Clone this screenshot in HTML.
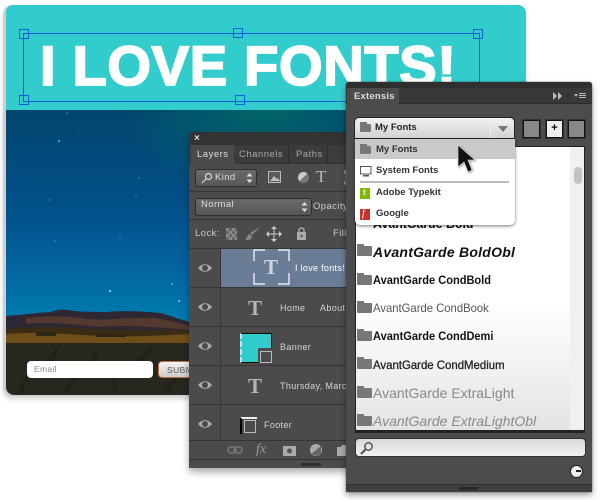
<!DOCTYPE html>
<html><head><meta charset="utf-8"><style>
html,body{margin:0;padding:0;background:#fff}
#p{position:relative;width:600px;height:500px;overflow:hidden;font-family:"Liberation Sans",sans-serif}
#p div,#p span.a,#p svg{position:absolute}
.h{width:8px;height:8px;border:1px solid #0e5fd8;box-sizing:content-box}
.t{white-space:nowrap}
.ln{color:#d4d4d4;font-size:9px;letter-spacing:.35px}
.fr{color:#111;left:373px;white-space:nowrap;font-size:12px;transform-origin:left center;filter:blur(.25px)}
.fo{left:357px;width:15px;height:10px;background:#777;border-radius:1px}
.fo:before{content:"";position:absolute;left:0;top:-2px;width:7px;height:3px;background:#777}
.ti{font-family:'Liberation Serif',serif;font-size:21px;font-weight:bold;line-height:28px;color:#b4b4b4}
</style></head><body><div id="p">
<!-- card -->
<div style="left:3px;top:5px;width:523px;height:391px;border-radius:9px;background:#cfcfcf;box-shadow:0 3px 5px rgba(0,0,0,.18)"></div>
<div style="left:6px;top:5px;width:520px;height:105px;background:#33cccc;border-radius:7px 8px 0 0"></div>
<div style="left:6px;top:110px;width:520px;height:233px;background:linear-gradient(180deg,#03466f 0,#024f88 40%,#0465a0 70%,#0079ad 88%,#0f8296 100%)"></div>
<div style="left:120px;top:110px;width:240px;height:90px;background:radial-gradient(ellipse at 60% 0,rgba(0,110,100,.75),rgba(0,100,100,0) 70%)"></div>
<svg style="left:6px;top:110px" width="190" height="240" viewBox="0 0 190 240" fill="#2f93c4"><rect x="52" y="30" width="2" height="2" fill="#35a4e0"/><rect x="165" y="173" width="2" height="2" fill="#35a4e0"/><rect x="60" y="2" width="2" height="2" opacity=".5"/><rect x="71" y="21" width="1" height="1" opacity=".5"/><rect x="153" y="33" width="2" height="2" opacity=".5"/><rect x="43" y="89" width="2" height="2" opacity=".5"/><rect x="129" y="84" width="2" height="2" opacity=".5"/><rect x="48" y="130" width="2" height="2" opacity=".5"/><rect x="113" y="126" width="2" height="2" opacity=".5"/><rect x="132" y="67" width="2" height="2" opacity=".5"/><rect x="105" y="157" width="1" height="1" opacity=".5"/><rect x="103" y="180" width="2" height="2" fill="#8cc"/><rect x="79" y="207" width="2" height="2" fill="#9cc"/><rect x="172" y="190" width="2" height="2" fill="#6bc"/></svg>
<svg style="left:6px;top:305px" width="184" height="38" viewBox="0 0 184 38"><path d="M0 11C15 10 30 8 45 7 50 5 56 4 62 5 72 7 85 7 100 7 120 5 140 7 155 8 165 11 175 15 184 17V38H0Z" fill="#2c2733"/><path d="M20 13C40 11 60 10 80 14 100 16 125 12 150 13 160 15 170 17 184 21V25C150 22 120 20 90 22 60 18 40 17 20 19Z" fill="#54392f"/><path d="M0 24C30 21 60 22 90 24 130 26 160 25 184 25V38H0Z" fill="#3a2c14"/><path d="M0 29C40 26 60 30 100 31 140 32 160 30 184 29V38H0Z" fill="#6e4f17"/><path d="M30 27H50V31H30ZM90 29H120V32H90Z" fill="#2f2714"/></svg>
<div style="left:6px;top:343px;width:520px;height:52px;background:#262820;border-radius:0 0 8px 8px"></div>
<svg style="left:6px;top:343px" width="190" height="52" viewBox="0 0 190 52" fill="none" stroke="#202219" stroke-width="5"><path d="M15 50C15 25 50 25 50 5M60 50C70 25 85 30 90 10M110 48C100 25 135 25 145 6M160 50C165 35 180 30 188 18"/></svg>
<div style="left:27px;top:361px;width:126px;height:17px;background:#fff;border-radius:4px"></div>
<div class="t" style="left:34px;top:364px;font-size:8.5px;color:#888;letter-spacing:.3px">Email</div>
<div style="left:158px;top:361px;width:60px;height:17px;background:linear-gradient(#f4f4f4,#ccc);border:1px solid #c0703f;box-sizing:border-box;border-radius:4px"></div>
<div class="t" style="left:167px;top:365px;font-size:8.5px;color:#555;letter-spacing:.4px">SUBMIT</div>
<!-- headline -->
<div class="t" style="left:40px;top:33px;font-size:56px;line-height:66px;font-weight:bold;color:#fff;letter-spacing:.7px;-webkit-text-stroke:1.8px #fff">I LOVE FONTS!</div>
<div style="left:23px;top:33px;width:455px;height:67px;border:1px solid #0e5fd8"></div>
<div class="h" style="left:19px;top:29px"></div>
<div class="h" style="left:233px;top:28px"></div>
<div class="h" style="left:473px;top:29px"></div>
<div class="h" style="left:19px;top:95px"></div>
<div class="h" style="left:235px;top:95px"></div>
<!-- layers panel -->
<div style="left:189px;top:132px;width:170px;height:336px;background:#4b4b4b;box-shadow:0 4px 8px rgba(0,0,0,.35);border-radius:3px 3px 0 0;overflow:hidden">
 <div style="left:0;top:0;width:170px;height:13px;background:#333"></div>
 <div class="t" style="left:5px;top:1px;font-size:10px;color:#ddd;font-weight:bold">×</div>
 <div style="left:0;top:13px;width:170px;height:18px;background:#3c3c3c;border-bottom:1px solid #333"></div>
 <div style="left:2px;top:13px;width:43px;height:19px;background:#4b4b4b"></div>
 <div class="t" style="left:8px;top:17px;font-size:9.5px;color:#ddd;letter-spacing:.5px">Layers</div>
 <div class="t" style="left:50px;top:17px;font-size:9.5px;color:#a6a6a6;letter-spacing:.5px">Channels</div>
 <div class="t" style="left:107px;top:17px;font-size:9.5px;color:#a6a6a6;letter-spacing:.5px">Paths</div>
 <div style="left:99px;top:14px;width:1px;height:18px;background:#2c2c2c"></div>
 <div style="left:138px;top:14px;width:1px;height:18px;background:#2c2c2c"></div>
 <div style="left:6px;top:37px;width:60px;height:16px;background:linear-gradient(#6a6a6a,#575757);border:1px solid #2d2d2d;border-radius:3px"></div>
 <svg style="left:12px;top:40px" width="12" height="12" viewBox="0 0 12 12" fill="none" stroke="#ddd" stroke-width="1.2"><circle cx="7.5" cy="4.5" r="3"/><path d="M5 7L1 11"/></svg>
 <div class="t" style="left:26px;top:40px;font-size:9.5px;color:#ddd;letter-spacing:.4px">Kind</div>
 <svg style="left:57px;top:40px" width="7" height="12" viewBox="0 0 7 12" fill="#ddd"><path d="M3.5 1L6.5 4.5H.5ZM3.5 11L.5 7.5H6.5Z"/></svg>
 <svg style="left:79px;top:39px" width="16" height="13" viewBox="0 0 16 13"><rect x=".5" y=".5" width="12" height="11" fill="#5a5a5a" stroke="#bbb"/><path d="M2 10L6 5 9 8 10 7 12 10Z" fill="#bbb"/></svg>
 <div style="left:109px;top:40px;width:11px;height:11px;border-radius:50%;background:linear-gradient(135deg,#ccc 50%,#777 50%)"></div>
 <div class="t" style="left:127px;top:36px;font-family:'Liberation Serif',serif;font-size:17px;line-height:18px;color:#bbb">T</div>
 <svg style="left:153px;top:38px" width="8" height="15" viewBox="0 0 8 15" fill="none" stroke="#bbb"><path d="M4 3V12"/><circle cx="4" cy="2" r="1.3"/><circle cx="4" cy="13" r="1.3"/></svg>
 <div style="left:0;top:59px;width:170px;height:1px;background:#363636"></div>
 <div style="left:6px;top:66px;width:115px;height:16px;background:linear-gradient(#6a6a6a,#575757);border:1px solid #2d2d2d;border-radius:3px"></div>
 <div class="t" style="left:12px;top:67px;font-size:9.5px;color:#ddd;letter-spacing:.4px">Normal</div>
 <svg style="left:112px;top:69px" width="7" height="12" viewBox="0 0 7 12" fill="#ddd"><path d="M3.5 1L6.5 4.5H.5ZM3.5 11L.5 7.5H6.5Z"/></svg>
 <div class="t" style="left:124px;top:69px;font-size:9.5px;color:#ccc;letter-spacing:.4px">Opacity</div>
 <div style="left:0;top:87px;width:170px;height:1px;background:#363636"></div>
 <div class="t" style="left:6px;top:96px;font-size:9.5px;color:#ccc;letter-spacing:.4px">Lock:</div>
 <div style="left:37px;top:96px;width:11px;height:12px;background:repeating-conic-gradient(#666 0 25%,#8a8a8a 0 50%) 0 0/6px 6px"></div>
 <svg style="left:55px;top:94px" width="17" height="16" viewBox="0 0 17 16"><path d="M16 1L8 9 6 7ZM5 8C3 9 4 12 1 13 4 15 8 14 8 10Z" fill="#888"/></svg>
 <svg style="left:77px;top:94px" width="16" height="16" viewBox="0 0 16 16" fill="none" stroke="#ccc"><path d="M8 2V14M2 8H14"/><path d="M8 0L11 3H5ZM8 16L5 13H11ZM0 8L3 5V11ZM16 8L13 11V5Z" fill="#ccc" stroke="none"/></svg>
 <svg style="left:107px;top:94px" width="11" height="15" viewBox="0 0 11 15"><path d="M3 6V4C3 1.500 8 1.500 8 4V6" fill="none" stroke="#aaa" stroke-width="1.500"/><rect x="1" y="6" width="9" height="8" fill="#aaa"/><circle cx="5.500" cy="10" r="1.200" fill="#555"/></svg>
 <div class="t" style="left:144px;top:96px;font-size:9.5px;color:#ccc;letter-spacing:.4px">Fill</div>
 <div style="left:0;top:116px;width:170px;height:1px;background:#363636"></div>
</div>
<!-- rows -->
<div style="left:221px;top:249px;width:128px;height:38px;background:#6b7d96"></div>
<div style="left:189px;top:287px;width:160px;height:1px;background:#373737"></div>
<div style="left:189px;top:326px;width:160px;height:1px;background:#373737"></div>
<div style="left:189px;top:365px;width:160px;height:1px;background:#373737"></div>
<div style="left:189px;top:404px;width:160px;height:1px;background:#373737"></div>
<div style="left:189px;top:440px;width:160px;height:1px;background:#343434"></div>
<div style="left:189px;top:459px;width:160px;height:1px;background:#333"></div>
<div style="left:220px;top:248px;width:1px;height:192px;background:#373737"></div>
<svg style="left:197px;top:263px" width="16" height="176" viewBox="0 0 16 176" fill="#aaa"><path d="M1 5C5 0 11 0 15 5 11 10 5 10 1 5Z"/><circle cx="8" cy="5" r="3" fill="#4a4a4a"/><path d="M1 44C5 39 11 39 15 44 11 49 5 49 1 44Z"/><circle cx="8" cy="44" r="3" fill="#4a4a4a"/><path d="M1 83C5 78 11 78 15 83 11 88 5 88 1 83Z"/><circle cx="8" cy="83" r="3" fill="#4a4a4a"/><path d="M1 122C5 117 11 117 15 122 11 127 5 127 1 122Z"/><circle cx="8" cy="122" r="3" fill="#4a4a4a"/><path d="M1 161C5 156 11 156 15 161 11 166 5 166 1 161Z"/><circle cx="8" cy="161" r="3" fill="#4a4a4a"/></svg>
<svg style="left:253px;top:249px" width="37" height="36" viewBox="0 0 37 36" fill="none" stroke="#fff" stroke-width="1.200"><path d="M1 12V1H12M25 1H36V12M36 24V35H25M12 35H1V24"/></svg>
<div class="t ti" style="left:264px;top:253px;color:#ccd3dc">T</div>
<div class="t" style="left:295px;top:263px;font-size:9px;color:#fff;letter-spacing:.3px">I love fonts!</div>
<div class="t ti" style="left:248px;top:294px">T</div>
<div class="t ln" style="left:280px;top:303px">Home</div>
<div class="t ln" style="left:320px;top:303px">About</div>
<div style="left:240px;top:333px;width:32px;height:30px;background:#3cc;border:1px solid #000;border-left:2px dashed #cde;box-sizing:border-box"></div>
<div style="left:258px;top:348px;width:15px;height:16px;background:#4b4b4b"></div>
<div style="left:260px;top:351px;width:10px;height:10px;border:1px solid #bbb"></div>
<div class="t ln" style="left:280px;top:342px">Banner</div>
<div class="t ti" style="left:248px;top:372px">T</div>
<div class="t ln" style="left:280px;top:381px">Thursday, March</div>
<div style="left:240px;top:417px;width:15px;height:15px;border-left:2px solid #000;border-top:2px solid #eee"></div>
<div style="left:244px;top:420px;width:10px;height:11px;border:1px solid #bbb"></div>
<div class="t ln" style="left:264px;top:420px">Footer</div>
<svg style="left:227px;top:444px" width="120" height="14" viewBox="0 0 120 14"><rect x="1" y="3" width="8" height="6" rx="3" fill="none" stroke="#777" stroke-width="1.500"/><rect x="7" y="3" width="8" height="6" rx="3" fill="none" stroke="#777" stroke-width="1.500"/><rect x="56" y="2" width="13" height="10" fill="#aaa"/><circle cx="62.500" cy="7" r="2.500" fill="#555"/><circle cx="89" cy="6" r="6" fill="#aaa"/><path d="M84 10L94 2V9L90 12Z" fill="#666"/><path d="M110 3H114L115 1H120V12H110Z" fill="#aaa"/></svg>
<div class="t" style="left:256px;top:442px;font-family:'Liberation Serif',serif;font-style:italic;font-size:14px;color:#999">fx</div>
<div style="left:301px;top:463px;width:20px;height:3px;background:#2f2f2f"></div>
<!-- Extensis panel -->
<div style="left:346px;top:82px;width:246px;height:410px;background:#4c4c4c;border-radius:3px 3px 0 0;box-shadow:0 3px 7px rgba(0,0,0,.4),0 0 1px #222"></div>
<div style="left:346px;top:82px;width:246px;height:6px;background:#2f2f2f;border-radius:3px 3px 0 0"></div>
<div style="left:346px;top:88px;width:246px;height:15px;background:#383838;border-bottom:1px solid #2c2c2c"></div>
<div style="left:347px;top:88px;width:52px;height:17px;background:#4c4c4c"></div>
<div class="t" style="left:354px;top:91px;font-size:9.5px;font-weight:bold;color:#ddd;letter-spacing:.2px">Extensis</div>
<svg style="left:552px;top:91px" width="40" height="10" viewBox="0 0 40 10" fill="#bbb"><path d="M1 1L5 5 1 9ZM6 1L10 5 6 9Z"/><rect x="15" y="0" width="2" height="10" fill="#333"/><path d="M22 3H26L24 6Z"/><rect x="27" y="2" width="7" height="1"/><rect x="27" y="4" width="7" height="1"/><rect x="27" y="6" width="7" height="1"/></svg>
<!-- list -->
<div style="left:355px;top:146px;width:230px;height:285px;box-sizing:border-box;border:1px solid #222;background:linear-gradient(#fff 0,#fff 55%,#e4e4e4 100%)"></div>
<div style="left:570px;top:147px;width:14px;height:283px;background:#f0f0f0"></div>
<div style="left:574px;top:167px;width:8px;height:17px;background:#c2c2c2;border-radius:4px"></div>
<div class="fr" style="top:216px;font-weight:bold;font-size:13px;transform:scaleX(.95)">AvantGarde Bold</div>
<div class="fo" style="top:246px"></div><div class="fr" style="top:244px;font-weight:bold;font-style:italic;font-size:14px;letter-spacing:.25px">AvantGarde BoldObl</div>
<div class="fo" style="top:275px"></div><div class="fr" style="top:273px;font-weight:bold;transform:scaleX(.92)">AvantGarde CondBold</div>
<div class="fo" style="top:303px"></div><div class="fr" style="top:301px;color:#555;transform:scaleX(.94)">AvantGarde CondBook</div>
<div class="fo" style="top:331px"></div><div class="fr" style="top:329px;font-weight:bold;transform:scaleX(.92)">AvantGarde CondDemi</div>
<div class="fo" style="top:359px"></div><div class="fr" style="top:358px;color:#222;-webkit-text-stroke:.3px #222;transform:scaleX(.95)">AvantGarde CondMedium</div>
<div class="fo" style="top:388px"></div><div class="fr" style="top:385px;color:#888;font-size:14px">AvantGarde ExtraLight</div>
<div class="fo" style="top:416px"></div><div class="fr" style="top:413px;color:#888;font-size:14px;font-style:italic">AvantGarde ExtraLightObl</div>
<div style="left:355px;top:431px;width:230px;height:2px;background:#222"></div>
<!-- toolbar buttons -->
<div style="left:523px;top:120px;width:15px;height:16px;background:#888;border:1px solid #111;box-shadow:0 0 0 1px #333"></div>
<div style="left:546px;top:120px;width:15px;height:16px;background:#eee;border:1px solid #111;box-shadow:0 0 0 1px #333;text-align:center;font:bold 11px/15px 'Liberation Sans',sans-serif;color:#000">+</div>
<div style="left:568px;top:120px;width:15px;height:16px;background:#888;border:1px solid #111;box-shadow:0 0 0 1px #333"></div>
<!-- dropdown -->
<div style="left:355px;top:141px;width:160px;height:84px;background:#fff;border-radius:0 0 5px 5px;box-shadow:0 1px 3px rgba(0,0,0,.55)"></div>
<div style="left:354px;top:117px;width:161px;height:22px;border:1px solid #222;box-sizing:border-box;border-radius:5px 5px 0 0;background:linear-gradient(#f2f2f2,#d2d2d2)"></div>
<div style="left:490px;top:118px;width:1px;height:20px;background:#eee"></div>
<svg style="left:497px;top:125px" width="12" height="8" viewBox="0 0 12 8"><path d="M1 1H11L6 7Z" fill="#777"/></svg>
<div class="fo" style="left:360px;top:124px;width:11px;height:8px"></div>
<div class="t" style="left:375px;top:122px;font-size:9.5px;font-weight:bold;color:#222">My Fonts</div>
<div style="left:355px;top:139px;width:160px;height:20px;background:#c9c9c9"></div>
<div class="fo" style="left:360px;top:146px;width:11px;height:8px"></div>
<div class="t" style="left:376px;top:144px;font-size:9.5px;font-weight:bold;color:#333">My Fonts</div>
<svg style="left:360px;top:166px" width="12" height="11" viewBox="0 0 12 11"><rect x=".5" y=".5" width="10.500" height="7.500" fill="#fff" stroke="#555"/><rect x="3" y="9" width="6" height="1.500" fill="#555"/></svg>
<div class="t" style="left:376px;top:165px;font-size:9.5px;font-weight:bold;color:#333">System Fonts</div>
<div style="left:360px;top:181px;width:149px;height:2px;background:#bbb"></div>
<div style="left:360px;top:188px;width:10px;height:11px;background:#7fba00"></div>
<div class="t" style="left:363px;top:188px;font-size:8px;color:#fff;font-weight:bold">t</div>
<div class="t" style="left:376px;top:187px;font-size:9.5px;font-weight:bold;color:#333">Adobe Typekit</div>
<div style="left:360px;top:209px;width:10px;height:11px;background:#c6322c"></div>
<div class="t" style="left:362px;top:208px;font-family:'Liberation Serif',serif;font-style:italic;font-size:10px;color:#fff">f</div>
<div class="t" style="left:376px;top:208px;font-size:9.5px;font-weight:bold;color:#333">Google</div>
<!-- cursor -->
<svg style="left:456px;top:143px;filter:drop-shadow(1px 1px 1px rgba(0,0,0,.4))" width="22" height="32" viewBox="0 0 22 32"><path d="M2 2V24L8 19 12 29 16 27 12 17H19Z" fill="#111" stroke="#eee" stroke-width=".6"/></svg>
<!-- search -->
<div style="left:355px;top:438px;width:231px;height:19px;background:linear-gradient(#d8d8d8,#f2f2f2);border-radius:4px;border:1px solid #333;box-sizing:border-box"></div>
<svg style="left:360px;top:441px" width="14" height="14" viewBox="0 0 14 14" fill="none" stroke="#555" stroke-width="1.500"><circle cx="8.500" cy="5.500" r="3.700"/><path d="M5.500 8.500L1 13" stroke-width="2.200"/></svg>
<div style="left:571px;top:466px;width:11px;height:11px;border-radius:50%;background:#eee;box-shadow:0 0 0 1px #222"></div>
<div style="left:576px;top:470px;width:5px;height:2px;background:#222"></div>
<div style="left:346px;top:484px;width:246px;height:1px;background:#2f2f2f"></div>
<div style="left:346px;top:485px;width:246px;height:7px;background:#404040"></div>
<div style="left:459px;top:487px;width:19px;height:3px;background:#2b2b2b"></div>
</div></body></html>
